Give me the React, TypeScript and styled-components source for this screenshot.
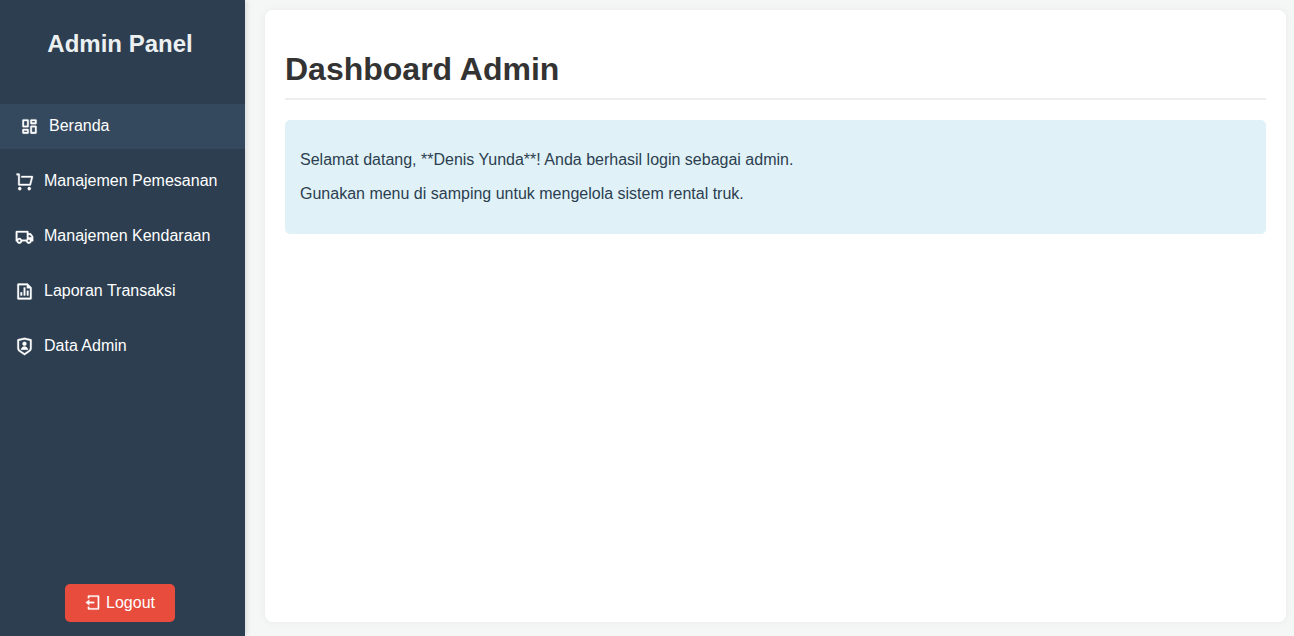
import React from 'react';
import styled, { createGlobalStyle } from 'styled-components';
import {
  RiDashboardLine,
  RiShoppingCartLine,
  RiTruckLine,
  RiFileChartLine,
  RiShieldUserLine,
  RiLogoutBoxLine,
} from 'react-icons/ri';

const GlobalStyle = createGlobalStyle`
  * { box-sizing: border-box; }
  body {
    margin: 0;
    background: #f4f7f6;
    color: #333;
    font-family: "Liberation Sans", Arial, sans-serif;
    font-size: 16px;
    line-height: 18px;
  }
`;

const Layout = styled.div`
  display: flex;
  min-height: 100vh;
`;

const Sidebar = styled.aside`
  display: flex;
  flex-direction: column;
  flex: 0 0 245px;
  background: #2c3e50;
  color: #ecf0f1;
  box-shadow: 2px 0 5px rgba(0, 0, 0, 0.1);
`;

const Brand = styled.h2`
  margin: 0;
  padding: 30px 5px 46px 0;
  font-size: 24px;
  line-height: 28px;
  text-align: center;
`;

const Menu = styled.ul`
  display: flex;
  flex-direction: column;
  gap: 10px;
  margin: 0;
  padding: 0;
  list-style: none;
`;

const MenuLink = styled.a<{ $active?: boolean }>`
  display: flex;
  align-items: center;
  gap: 10px;
  height: 45px;
  padding: 0 15px 2px ${({ $active }) => ($active ? 20 : 15)}px;
  background: ${({ $active }) => ($active ? '#34495e' : 'transparent')};
  color: #fff;
  text-decoration: none;
  white-space: nowrap;

  svg {
    flex: none;
    width: 19px;
    height: 19px;
    margin-top: 1px;
    overflow: visible;
    stroke-width: 0.4;
  }
`;

const SidebarFooter = styled.div`
  display: flex;
  justify-content: center;
  margin-top: auto;
  padding: 14px 5px 14px 0;
`;

const LogoutButton = styled.button`
  display: flex;
  align-items: center;
  gap: 4px;
  padding: 10px 20px;
  border: 0;
  border-radius: 5px;
  background: #e74c3c;
  color: #fff;
  font: inherit;
  cursor: pointer;

  svg {
    width: 17px;
    height: 17px;
    margin-bottom: 1px;
    stroke-width: 0.4;
  }
`;

const Main = styled.main`
  flex: 1;
  min-width: 0;
  margin: 10px 8px 14px 20px;
  padding: 20px;
  border-radius: 8px;
  background: #fff;
  box-shadow: 0 0 10px rgba(0, 0, 0, 0.05);
`;

const PageTitle = styled.h1`
  margin: 21px 0 20px;
  padding-bottom: 10px;
  border-bottom: 2px solid #eee;
  font-size: 32px;
  line-height: 37px;
`;

const Welcome = styled.section`
  padding: 15px;
  border-radius: 5px;
  background: #e0f2f7;
  color: #2c3e50;

  p {
    margin: 16px 0;
  }
`;

const menuItems = [
  { label: 'Beranda', Icon: RiDashboardLine, active: true },
  { label: 'Manajemen Pemesanan', Icon: RiShoppingCartLine },
  { label: 'Manajemen Kendaraan', Icon: RiTruckLine },
  { label: 'Laporan Transaksi', Icon: RiFileChartLine },
  { label: 'Data Admin', Icon: RiShieldUserLine },
];

export default function App() {
  return (
    <>
      <GlobalStyle />
      <Layout>
        <Sidebar>
          <Brand>Admin Panel</Brand>
          <nav>
            <Menu>
              {menuItems.map(({ label, Icon, active }) => (
                <li key={label}>
                  <MenuLink href="#" $active={active} aria-current={active ? 'page' : undefined}>
                    <Icon aria-hidden />
                    {label}
                  </MenuLink>
                </li>
              ))}
            </Menu>
          </nav>
          <SidebarFooter>
            <LogoutButton type="button">
              <RiLogoutBoxLine aria-hidden />
              Logout
            </LogoutButton>
          </SidebarFooter>
        </Sidebar>
        <Main>
          <PageTitle>Dashboard Admin</PageTitle>
          <Welcome>
            <p>Selamat datang, **Denis Yunda**! Anda berhasil login sebagai admin.</p>
            <p>Gunakan menu di samping untuk mengelola sistem rental truk.</p>
          </Welcome>
        </Main>
      </Layout>
    </>
  );
}
